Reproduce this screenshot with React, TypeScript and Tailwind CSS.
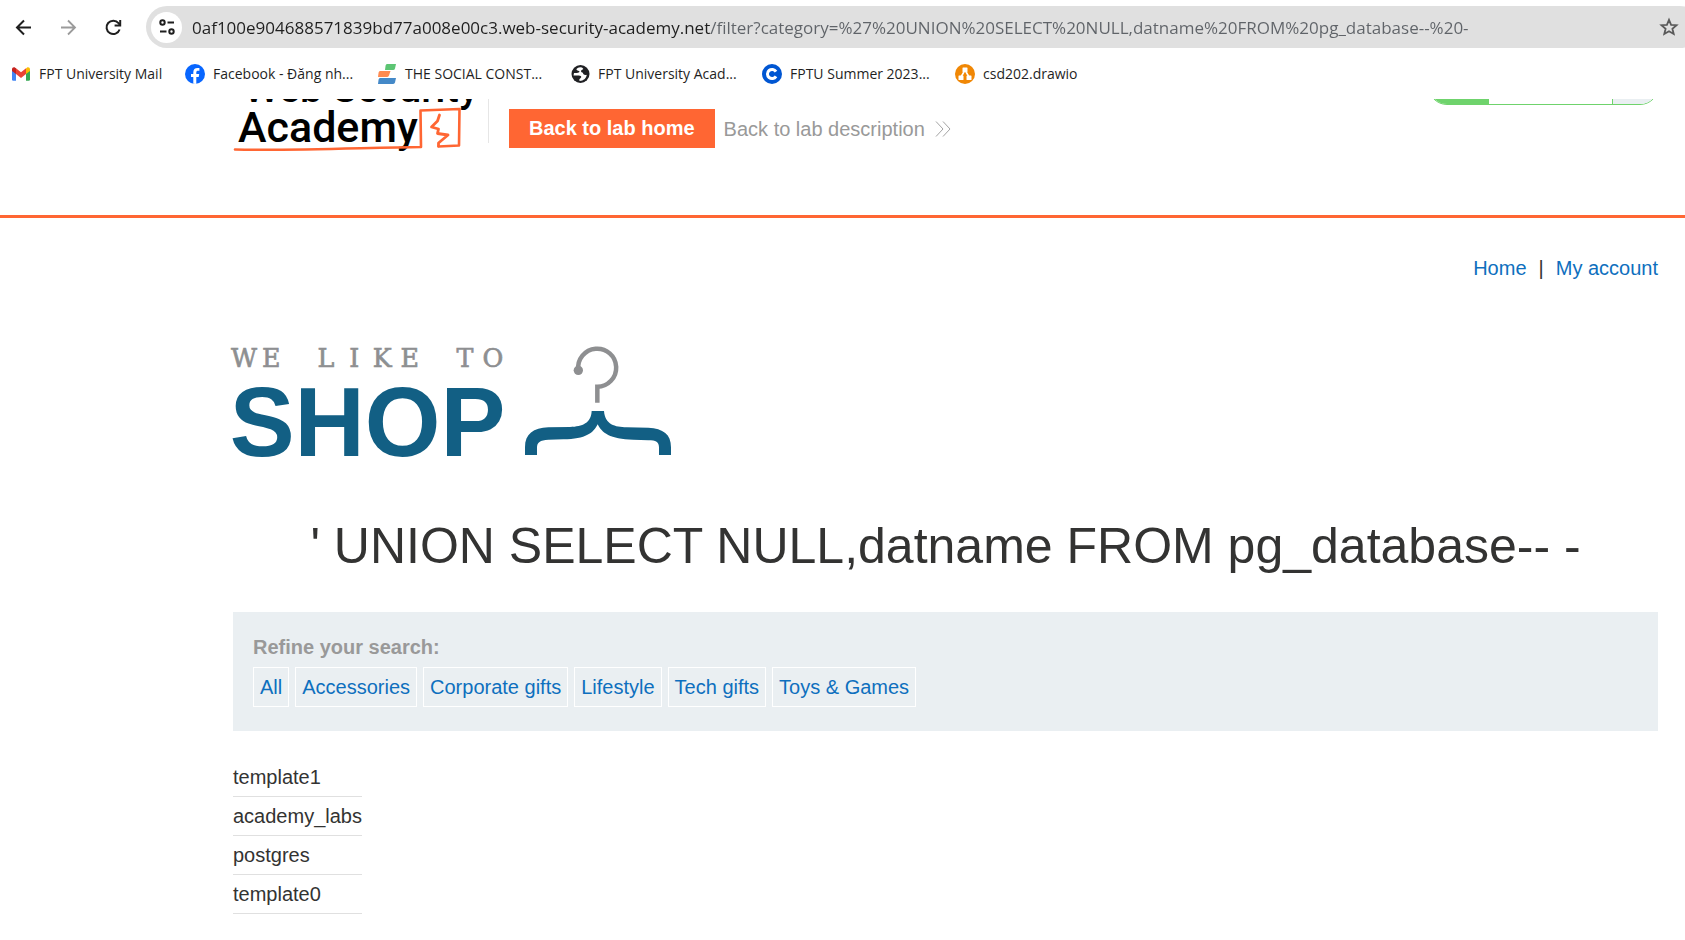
import React from "react";

function GmailIcon() {
  return (
    <svg viewBox="0 0 20 20" className="size-5 shrink-0" aria-hidden="true">
      <path d="M1 6v9.500a1.300 1.300 0 0 0 1.300 1.300H5V8.500z" fill="#4285f4" />
      <path d="M19 6v9.500a1.300 1.300 0 0 1-1.300 1.300H15V8.500z" fill="#34a853" />
      <path d="M15 4.500v5.500l4-3V5.300c0-2-2-2.600-3.200-1.600z" fill="#fbbc04" />
      <path d="M5 10V4.300l5 3.900 5-3.900V10l-5 3.900z" fill="#ea4335" />
      <path d="M1 5.300V7l4 3V4.300l-.8-.6C3 2.700 1 3.300 1 5.300z" fill="#c5221f" />
    </svg>
  );
}

function FacebookIcon() {
  return (
    <svg viewBox="0 0 20 20" className="size-5 shrink-0" aria-hidden="true">
      <circle cx="10" cy="10" r="10" fill="#0866ff" />
      <path d="M8.300 19.800v-6.700H6v-3h2.300V8.500c0-3.200 1.500-4.600 4.300-4.600.6 0 1.400.1 1.800.2v2.600h-1.200c-1.400 0-1.900.6-1.900 1.900v1.500h2.900l-.5 3h-2.400v6.800z" fill="#fff" />
    </svg>
  );
}

function StripesIcon() {
  return (
    <svg viewBox="0 0 20 20" className="size-5 shrink-0" aria-hidden="true">
      <path d="M10 0h9l-1 4.500a2 2 0 0 1-2 1.500H8l.6-4.500A2 2 0 0 1 10 0z" fill="#5cc573" />
      <path d="M3 7h10.500L12 11.500a2 2 0 0 1-1.800 1.500H1l.6-4.500A2 2 0 0 1 3 7z" fill="#ff8a50" />
      <path d="M3 14h16l-1 4.500a2 2 0 0 1-2 1.500H1l.6-4.500A2 2 0 0 1 3 14z" fill="#4489c8" />
    </svg>
  );
}

function GlobeIcon() {
  return (
    <svg viewBox="0 0 20 20" className="size-5 shrink-0" aria-hidden="true">
      <circle cx="10.500" cy="10" r="9" fill="#202124" />
      <path d="M11 3.300c-3.500.2-4.800 1.400-4.500 2.500.3 1 3 .7 3 1.900 0 1-3 1.300-5.500 1.200l-.5 2.500h5.200c2 0 2.700.8 2.500 1.800-.2.900-1.900 1.300-1.900 2.500l.3 1.300c4-.1 6.600-2.700 7.200-6.200-1 .4-2.600.3-3.300-.5-.6-.8-.2-1.600-1.200-1.800-1-.2-1.500-.8-1.200-1.700.3-1 1.600-1 2.200-1.800-.6-.9-1.300-1.600-2.300-1.700z" fill="#fff" />
    </svg>
  );
}

function CIcon() {
  return (
    <svg viewBox="0 0 20 20" className="size-5 shrink-0" aria-hidden="true">
      <circle cx="10" cy="10" r="10" fill="#0056d2" />
      <path d="M14 7.600A4.600 4.600 0 1 0 14 12.400" fill="none" stroke="#fff" strokeWidth="3" />
    </svg>
  );
}

function DrawioIcon() {
  return (
    <svg viewBox="0 0 20 20" className="size-5 shrink-0" aria-hidden="true">
      <circle cx="10" cy="10" r="10" fill="#f08705" />
      <path d="M10 6 6 13M10 6l4 7" stroke="#fff" strokeWidth="1.600" />
      <rect x="7.500" y="3.500" width="5" height="4.500" rx=".6" fill="#fff" />
      <rect x="3.500" y="11.500" width="5" height="4.500" rx=".6" fill="#fff" />
      <rect x="11.500" y="11.500" width="5" height="4.500" rx=".6" fill="#fff" />
    </svg>
  );
}

const bookmarks = [
  { label: "FPT University Mail", Icon: GmailIcon, width: "w-[126px]" },
  { label: "Facebook - Đăng nh...", Icon: FacebookIcon, width: "w-[144px]" },
  { label: "THE SOCIAL CONST...", Icon: StripesIcon, width: "w-[145px]" },
  { label: "FPT University Acad...", Icon: GlobeIcon, width: "w-[144px]" },
  { label: "FPTU Summer 2023...", Icon: CIcon, width: "w-[145px]" },
  { label: "csd202.drawio", Icon: DrawioIcon, width: "w-[97px]" },
];

function BrowserBar() {
  return (
    <div className="flex flex-col">
      <div className="flex h-12 items-end overflow-hidden pl-[13px]">
        <div className="flex h-[42px] shrink-0 items-center gap-6 pr-[22px]">
          <button type="button" aria-label="Back" className="size-[21px]">
            <svg viewBox="0 0 21 21" fill="none" stroke="#1f1f1f" strokeWidth="2">
              <path d="M18 10.500H4M11 3.500l-7 7 7 7" />
            </svg>
          </button>
          <button type="button" aria-label="Forward" className="size-[21px]">
            <svg viewBox="0 0 21 21" fill="none" stroke="#9b9b9b" strokeWidth="1.800">
              <path d="M3 10.500h14M10 3.500l7 7-7 7" />
            </svg>
          </button>
          <button type="button" aria-label="Reload" className="size-[21px]">
            <svg viewBox="0 0 21 21" fill="none" stroke="#1f1f1f" strokeWidth="2">
              <path d="M16.600 12.500A6.700 6.700 0 1 1 15.500 6.200L17 8" />
              <path d="M17.200 3v5.600h-5.600" />
            </svg>
          </button>
        </div>
        <div className="-mr-4 flex h-[42px] flex-1 items-center rounded-full bg-[#e0e0e0] pl-[5px] pr-[22px]">
          <button type="button" aria-label="View site information" className="grid size-[31px] shrink-0 place-items-center rounded-full bg-white">
            <svg viewBox="0 0 18 18" className="size-[18px]" fill="none" stroke="#1f1f1f" strokeWidth="2">
              <circle cx="4.500" cy="4.500" r="2.200" />
              <path d="M9.500 4.500H16M2 13.500h6.500" />
              <circle cx="13.500" cy="13.500" r="2.200" />
            </svg>
          </button>
          <input
            type="text"
            aria-label="Address"
            spellCheck={false}
            defaultValue="0af100e904688571839bd77a008e00c3.web-security-academy.net/filter?category=%27%20UNION%20SELECT%20NULL,datname%20FROM%20pg_database--%20-"
            className="ml-[10px] h-[42px] min-w-0 flex-1 bg-[linear-gradient(90deg,#1f1f1f_519px,#5f6368_519px)] bg-clip-text font-['Open_Sans','Noto_Sans',sans-serif] text-[17px] text-transparent outline-none"
          />
          <button type="button" aria-label="Bookmark this tab" className="size-5 shrink-0">
            <svg viewBox="0 0 20 20" fill="none" stroke="#5a5a5a" strokeWidth="1.800">
              <path d="M10 2.800l2.100 5 5.400.4-4.100 3.500 1.300 5.300L10 14.200 5.300 17l1.300-5.300L2.500 8.200l5.400-.4z" />
            </svg>
          </button>
        </div>
      </div>
      <nav aria-label="Bookmarks" className="flex h-[51px] items-center gap-5 pl-[11px] font-['Open_Sans','Noto_Sans',sans-serif] text-[14px] text-[#1f1f1f]">
        {bookmarks.map(({ label, Icon, width }) => (
          <a key={label} href="#" className="flex shrink-0 items-center gap-2">
            <Icon />
            <span className={`whitespace-nowrap ${width}`}>{label}</span>
          </a>
        ))}
      </nav>
    </div>
  );
}

function AcademyLogo() {
  return (
    <svg viewBox="233 99 250 56" className="h-14 w-[250px] shrink-0" role="img" aria-label="Web Security Academy">
      <g fontFamily="Roboto, sans-serif" fontWeight="500" fill="#000">
        <text x="244" y="102" fontSize="40">Web Security</text>
        <text x="238" y="142" fontSize="43">Academy</text>
      </g>
      <g fill="none" stroke="#ff6633" strokeLinejoin="round" strokeLinecap="round">
        <path d="M235 149.500C290 151 370 147.500 421 147L420.500 110.500l39-1.500-.5 36.500-20.500 1" strokeWidth="2.600" />
        <path d="M439.500 115l-2 6-6 6 7 2-1 4.500 10.500 1.500-9.500 8v3" strokeWidth="2.800" />
      </g>
    </svg>
  );
}

function LabHeader() {
  return (
    <header className="flex h-[119px] items-start border-b-[3px] border-[#ff6633] pl-[233px] pr-[26px]">
      <AcademyLogo />
      <div className="ml-[5px] h-11 w-px shrink-0 bg-[#e6e6e6]" />
      <div className="ml-5 flex items-center gap-[9px] pt-[10px] text-[20px] leading-[23px]">
        <a href="#" className="whitespace-nowrap bg-[#ff6633] px-5 py-2 font-bold text-white">Back to lab home</a>
        <a href="#" className="flex items-center gap-[10px] whitespace-nowrap pt-px text-[#999999]">
          Back to lab description
          <svg viewBox="0 0 16 16" className="size-4" fill="none" stroke="#a3a3a3" aria-hidden="true">
            <path d="M1 .5 8 8l-7 7.500M8 .5 15 8l-7 7.500" />
          </svg>
        </a>
      </div>
      <div className="ml-auto flex h-[6px] w-[231px] items-end overflow-hidden">
        <div className="flex h-[38px] w-full shrink-0 overflow-hidden rounded-full border border-[#6fd36c]">
          <div className="w-[60px] bg-[#6fd36c]" />
          <div className="flex-1" />
          <div className="w-[46px] border-l border-[#6fd36c] bg-[#eaeff2]" />
        </div>
      </div>
    </header>
  );
}

const tagline: [string, number][] = [
  ["W", 72], ["E", 154], ["L", 318], ["I", 403], ["K", 487], ["E", 569], ["T", 735], ["O", 819],
];

function ShopLogo() {
  return (
    <svg viewBox="39 51 1320 330" className="h-[110px] w-[440px] overflow-visible" role="img" aria-label="We like to shop">
      <g fontFamily="'DejaVu Serif', serif" fontSize="76" fill="#8e8f91" stroke="#8e8f91" strokeWidth="2" textAnchor="middle">
        {tagline.map(([letter, x]) => (
          <text key={x} x={x} y="110">{letter}</text>
        ))}
      </g>
      <text x="29" y="377" fontFamily="'Liberation Sans', Arial, sans-serif" fontWeight="700" fontSize="292" fill="#125f84">SHOP</text>
      <path d="M1075 120A57 57 0 1 1 1132 170V218" fill="none" stroke="#8e8f91" strokeWidth="13.500" />
      <circle cx="1075" cy="121" r="14" fill="#8e8f91" />
      <path
        d="M1115 243H1152C1155 284 1185 291 1220 292L1285 293C1330 296 1353 312 1353 352V375H1317V352C1317 336 1308 331 1285 331L1240 329C1170 328 1145 308 1133 283C1121 308 1098 328 1030 328L985 329C960 331 951 336 951 354V375H915V352C915 312 940 294 985 292L1050 291C1088 289 1113 280 1115 243Z"
        fill="#125f84"
      />
    </svg>
  );
}

const categories = ["All", "Accessories", "Corporate gifts", "Lifestyle", "Tech gifts", "Toys & Games"];
const rows = ["template1", "academy_labs", "postgres", "template0"];

export default function App() {
  return (
    <div className="min-h-screen bg-white font-['Liberation_Sans',Arial,sans-serif] text-[20px] leading-[23px] text-[#333332]">
      <BrowserBar />
      <LabHeader />
      <main className="pl-[233px] pr-[27px]">
        <nav aria-label="Account" className="flex justify-end gap-3 pt-[39px]">
          <a href="#" className="text-[#0e6fbe]">Home</a>
          <span>|</span>
          <a href="#" className="text-[#0e6fbe]">My account</a>
        </nav>
        <div className="pt-[67px]">
          <ShopLogo />
        </div>
        <h1 className="pt-[60px] text-center text-[50px] leading-[58px]">' UNION SELECT NULL,datname FROM pg_database-- -</h1>
        <section className="mt-[37px] bg-[#eaeff2] px-5 pb-6 pt-6">
          <p className="font-bold text-[#999999]">Refine your search:</p>
          <div className="mt-2 flex flex-wrap gap-[6px]">
            {categories.map((c) => (
              <a key={c} href="#" className="whitespace-nowrap border border-white px-[6px] py-2 leading-[22px] text-[#0e6fbe]">{c}</a>
            ))}
          </div>
        </section>
        <table className="mt-[27px] border-separate border-spacing-0">
          <tbody>
            {rows.map((r) => (
              <tr key={r}>
                <th scope="row" className="h-[39px] border-b border-[#e0e0e0] p-0 text-left font-normal">{r}</th>
              </tr>
            ))}
          </tbody>
        </table>
      </main>
    </div>
  );
}
